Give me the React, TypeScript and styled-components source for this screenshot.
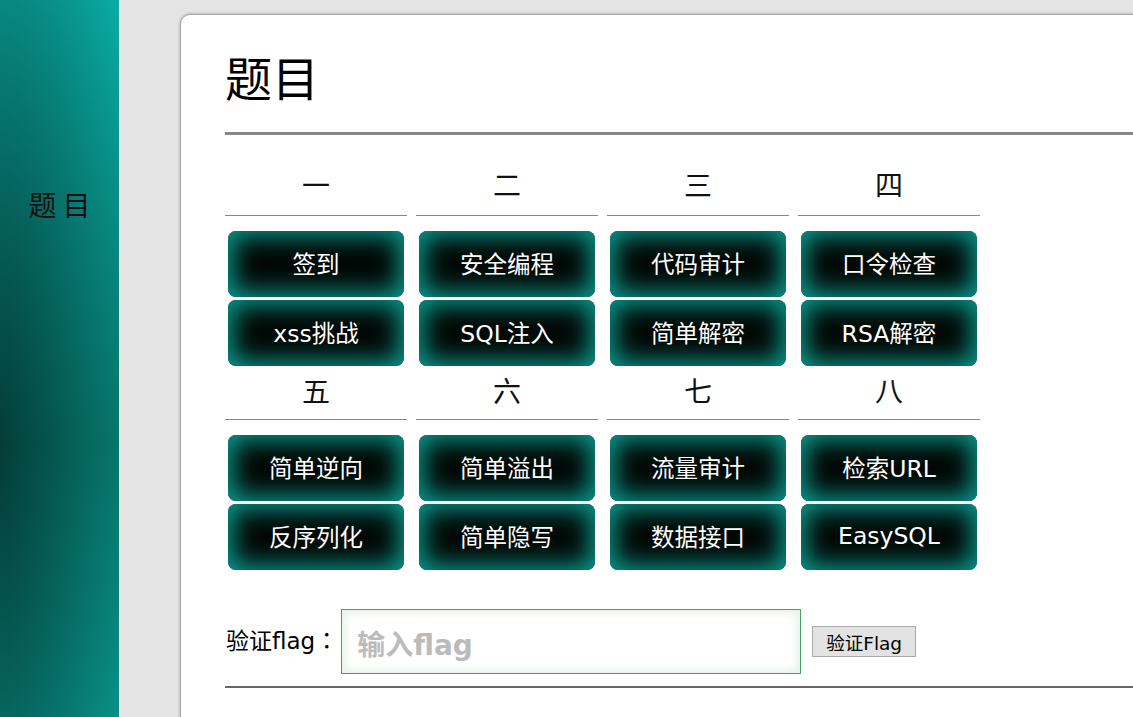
import React from "react";
import styled, { createGlobalStyle } from "styled-components";

const Global = createGlobalStyle`
  html, body { margin: 0; padding: 0; }
  body {
    background: #e4e4e4;
    font-family: "DejaVu Sans", "Noto Sans CJK SC", sans-serif;
    overflow: hidden;
  }
`;

const Page = styled.div`
  display: flex;
  width: 1133px;
  height: 717px;
  overflow: hidden;
`;

const Sidebar = styled.aside`
  flex: 0 0 119px;
  height: 717px;
  background:
    radial-gradient(150px 760px at 0 450px, rgba(0, 0, 0, 0.54), rgba(0, 0, 0, 0) 100%),
    linear-gradient(to bottom, #0aaea6 0%, #088479 62%, #0a9c92 100%);
  display: flex;
  justify-content: center;
  padding-top: 184px;
  box-sizing: border-box;
`;

const SideTitle = styled.div`
  font-family: "Noto Sans CJK SC", sans-serif;
  font-size: 28px;
  line-height: 40px;
  height: 40px;
  color: #111;
  letter-spacing: 6px;
  margin-right: -6px;
`;

const Main = styled.main`
  flex: 1;
  padding: 14px 0 0 61px;
  min-width: 0;
`;

const Card = styled.section`
  width: 1000px;
  height: 760px;
  background: #fff;
  border: 1px solid #a8a8a8;
  border-radius: 10px;
  box-shadow: 0 0 3px #9a9a9a;
  padding: 26px 0 0 44px;
  box-sizing: border-box;
`;

const Title = styled.h1`
  margin: 0;
  font-family: "Noto Sans CJK SC", sans-serif;
  font-weight: 400;
  font-size: 47px;
  line-height: 70px;
  color: #000;
  padding-bottom: 21px;
  border-bottom: 3px solid #888;
`;

const Groups = styled.div<{ $top: number }>`
  display: grid;
  grid-template-columns: repeat(4, 182px);
  column-gap: 9px;
  margin-top: ${(p) => p.$top}px;
`;

const Column = styled.div`
  display: flex;
  flex-direction: column;
  align-items: center;
`;

const Header = styled.div<{ $pad: number }>`
  align-self: stretch;
  text-align: center;
  font-family: "Noto Sans CJK SC", sans-serif;
  font-size: 28px;
  line-height: 40px;
  color: #111;
  padding-bottom: ${(p) => p.$pad}px;
  border-bottom: 1px solid #888;
  margin-bottom: 15px;
`;

const Task = styled.button`
  width: 176px;
  height: 66px;
  margin-bottom: 3px;
  border: none;
  border-radius: 8px;
  background: #030805;
  box-shadow: inset 0 0 24px 5px #0a9e92;
  color: #fff;
  font-family: "DejaVu Sans", "Noto Sans CJK SC", sans-serif;
  font-size: 23.5px;
  cursor: pointer;
  padding: 0 0 3px;
  &:last-child { margin-bottom: 0; }
`;

const VerifyRow = styled.form`
  display: flex;
  align-items: center;
  margin-top: 39px;
  padding-bottom: 12px;
  border-bottom: 2px solid #666;
`;

const Label = styled.label`
  font-size: 23px;
  color: #000;
  margin-right: 3px;
  padding: 0 0 5px 1px;
`;

const Colon = styled.span`
  font-family: "Noto Sans CJK TC", sans-serif;
`;

const FlagInput = styled.input`
  width: 460px;
  height: 65px;
  box-sizing: border-box;
  border: 1px solid #4a9f62;
  box-shadow: inset 0 0 8px 3px #e6f0e8;
  padding: 8px 0 0 15px;
  font-family: "DejaVu Sans", "Noto Sans CJK SC", sans-serif;
  font-size: 28px;
  font-weight: 700;
  caret-color: #000;
  outline: none;
  &::placeholder { color: #bbb; font-weight: 700; }
`;

const SubmitButton = styled.button`
  margin-left: 11px;
  width: 104px;
  height: 31px;
  background: #e3e3e3;
  border: 1px solid #a9a9a9;
  border-radius: 0;
  font-family: "DejaVu Sans", "Noto Sans CJK SC", sans-serif;
  font-size: 18.5px;
  color: #000;
  padding: 0;
`;

const groups = [
  [
    { h: "一", items: ["签到", "xss挑战"] },
    { h: "二", items: ["安全编程", "SQL注入"] },
    { h: "三", items: ["代码审计", "简单解密"] },
    { h: "四", items: ["口令检查", "RSA解密"] },
  ],
  [
    { h: "五", items: ["简单逆向", "反序列化"] },
    { h: "六", items: ["简单溢出", "简单隐写"] },
    { h: "七", items: ["流量审计", "数据接口"] },
    { h: "八", items: ["检索URL", "EasySQL"] },
  ],
];

export default function App() {
  return (
    <Page>
      <Global />
      <Sidebar>
        <SideTitle>题目</SideTitle>
      </Sidebar>
      <Main>
        <Card>
          <Title>题目</Title>
          {groups.map((g, gi) => (
            <Groups key={gi} $top={gi === 0 ? 29 : 4}>
              {g.map((c) => (
                <Column key={c.h}>
                  <Header $pad={gi === 0 ? 11 : 9}>{c.h}</Header>
                  {c.items.map((t) => (
                    <Task key={t} type="button">{t}</Task>
                  ))}
                </Column>
              ))}
            </Groups>
          ))}
          <VerifyRow onSubmit={(e) => e.preventDefault()}>
            <Label>
              验证flag<Colon>：</Colon>
            </Label>
            <FlagInput placeholder="输入flag" autoFocus />
            <SubmitButton type="submit">验证Flag</SubmitButton>
          </VerifyRow>
        </Card>
      </Main>
    </Page>
  );
}
